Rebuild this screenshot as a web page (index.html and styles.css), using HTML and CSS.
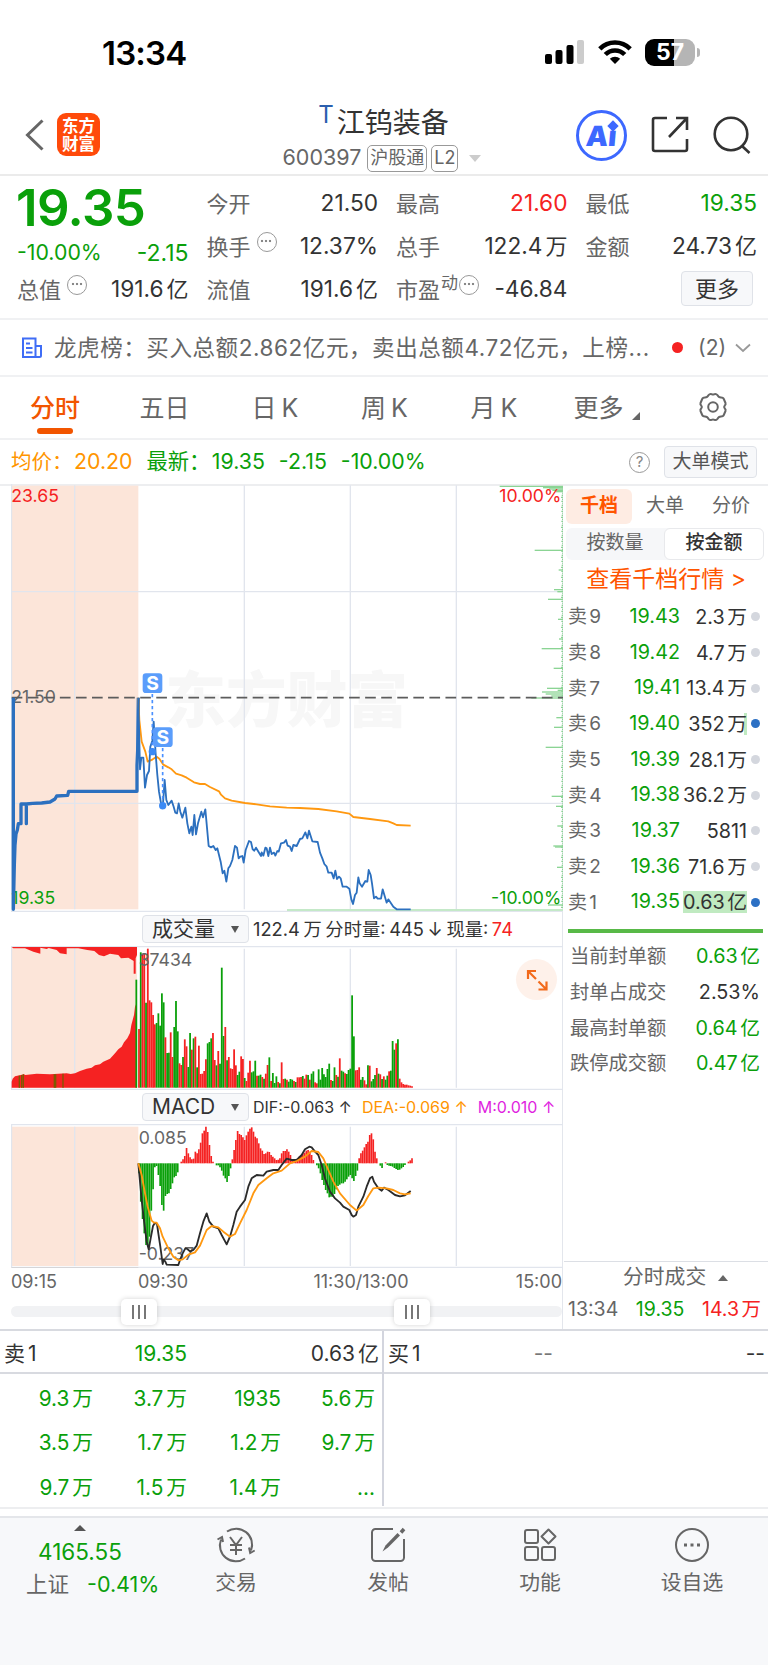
FILE: index.html
```html
<!DOCTYPE html>
<html lang="zh-CN">
<head>
    <meta charset="UTF-8">
    <meta name="viewport" content="width=device-width, initial-scale=1.0">
    <title>江钨装备 600397</title>
    <link rel="stylesheet" href="styles.css">
</head>
<body>

    <div class="status-bar">
        <span class="clock">13:34</span>
        <div class="status-icons">
            <svg width="40" height="26" viewBox="0 0 40 26">
                <rect x="0" y="15" width="7" height="10" rx="2"/>
                <rect x="10.500" y="11" width="7" height="14" rx="2"/>
                <rect x="21.500" y="6" width="7" height="19" rx="2"/>
                <rect x="32" y="1" width="7" height="24" rx="2" fill="#ccc"/>
            </svg>
            <svg width="34" height="26" viewBox="0 0 34 26" fill="none" stroke="#000" stroke-width="4.600">
                <path d="M1.800 9.800a21.500 21.500 0 0 1 30.400 0"/>
                <path d="M7.300 15.500a13.700 13.700 0 0 1 19.400 0"/>
                <path d="M17 25l-5.200-5.200a7.400 7.400 0 0 1 10.400 0z" fill="#000" stroke="none"/>
            </svg>
            <div class="battery"><span>57</span></div>
        </div>
    </div>

    <header class="header">
        <div class="header-left">
            <svg width="20" height="32" viewBox="0 0 20 32" fill="none" stroke="#666" stroke-width="3"><path d="M17.500 1.500L2.500 16l15 14.500"/></svg>
            <div class="logo"><span>东方</span><span>财富</span></div>
        </div>
        <div class="header-title">
            <div class="stock-name"><sup>T</sup>江钨装备</div>
            <div class="stock-code">600397 <span class="tag">沪股通</span><span class="tag">L2</span><i class="tri-down"></i></div>
        </div>
        <div class="header-right">
            <div class="ai"><span>Ai</span><i></i></div>
            <svg width="38" height="38" viewBox="0 0 38 38" fill="none" stroke="#333" stroke-width="2.600"><path d="M16 2H4a2 2 0 0 0-2 2v29a2 2 0 0 0 2 2h30a2 2 0 0 0 2-2V23M25 2h11v12M36 2L18 21"/></svg>
            <svg width="38" height="38" viewBox="0 0 38 38" fill="none" stroke="#333" stroke-width="2.600"><circle cx="18" cy="18" r="16.300"/><path d="M28.500 29.500l8 7.500"/></svg>
        </div>
    </header>

    <section class="quote">
        <div class="quote-col">
            <div class="price">19.35</div>
            <div class="change green"><span>-10.00%</span><span>-2.15</span></div>
            <div class="cell"><label>总值<i class="more-dot"></i></label><b>191.6<u>亿</u></b></div>
        </div>
        <div class="quote-col">
            <div class="cell"><label>今开</label><b>21.50</b></div>
            <div class="cell"><label>换手<i class="more-dot"></i></label><b>12.37%</b></div>
            <div class="cell"><label>流值</label><b>191.6<u>亿</u></b></div>
        </div>
        <div class="quote-col">
            <div class="cell"><label>最高</label><b class="red">21.60</b></div>
            <div class="cell"><label>总手</label><b>122.4<u>万</u></b></div>
            <div class="cell"><label>市盈<sup>动</sup><i class="more-dot"></i></label><b>-46.84</b></div>
        </div>
        <div class="quote-col">
            <div class="cell"><label>最低</label><b class="green">19.35</b></div>
            <div class="cell"><label>金额</label><b>24.73<u>亿</u></b></div>
            <div class="cell cell-end"><button class="btn-more">更多</button></div>
        </div>
    </section>

    <section class="news">
        <svg width="22" height="22" viewBox="0 0 22 22" fill="none" stroke="#3f6df6" stroke-width="2"><path d="M2 1.500h12.500v18.500H2zM14.500 9H20v9.500a1.500 1.500 0 0 1-1.500 1.500H14.500M5 6.500h4M5 11h6.500M5 15.500h6.500"/></svg>
        <span class="news-text">龙虎榜：买入总额2.862亿元，卖出总额4.72亿元，上榜...</span>
        <i class="news-dot"></i>
        <span class="news-count">(2)</span>
        <svg width="16" height="10" viewBox="0 0 16 10" fill="none" stroke="#999" stroke-width="1.800"><path d="M1 1.500l7 6.500 7-6.500"/></svg>
    </section>

    <nav class="tabs">
        <span class="tab active">分时</span>
        <span class="tab">五日</span>
        <span class="tab">日 K</span>
        <span class="tab">周 K</span>
        <span class="tab">月 K</span>
        <span class="tab">更多<i class="corner"></i></span>
        <svg class="gear" width="30" height="30" viewBox="0 0 30 30" fill="none" stroke="#666" stroke-width="2" stroke-linejoin="round"><path d="M10.500 3.200Q12 1.500 13.500 2.200Q15 3 16.500 2.200Q18 1.500 19.500 3.200Q20.500 5.500 23 5.500Q25.500 5.500 26 7.500L27.500 11Q28 12.500 26.800 13.500Q25.500 15 26.800 16.500Q28 17.500 27.500 19L26 22.500Q25.500 24.500 23 24.500Q20.500 24.500 19.500 26.800Q18 28.500 16.500 27.800Q15 27 13.500 27.800Q12 28.500 10.500 26.800Q9.500 24.500 7 24.500Q4.500 24.500 4 22.500L2.500 19Q2 17.500 3.200 16.500Q4.500 15 3.200 13.500Q2 12.500 2.500 11L4 7.500Q4.500 5.500 7 5.500Q9.500 5.500 10.500 3.200z"/><circle cx="15" cy="15" r="4.800"/></svg>
    </nav>

    <div class="info">
        <span class="orange">均价：<b>20.20</b></span>
        <span class="green">最新：<b>19.35</b></span>
        <span class="green">-2.15</span>
        <span class="green">-10.00%</span>
        <i class="help">?</i>
        <button class="btn-mode">大单模式</button>
    </div>

    <main class="main">
        <!-- chart coordinates are 3 units per pixel -->
        <div class="charts">
            <svg class="chart-price" viewBox="33 12 1656 1284" id="priceChart">
                <rect x="35" y="17" width="380" height="1271" fill="#fce5d9"/>
                <text class="watermark" x="496" y="725">东方财富</text>
                <path class="grid" d="M224 16V1288M733 16V1288M1051 16V1288M1369 16V1288M35 335H1689M35 970H1689"/>
                <path class="grid" d="M34.500 12V1294M33 1294H1689"/>
                <text class="axis red" x="34" y="65">23.65</text>
                <text class="axis" x="34" y="668">21.50</text>
                <text class="axis green" x="34" y="1273">19.35</text>
                <rect x="861" y="1287" width="828" height="6" fill="#c4e9c8"/>
                <g id="depth" stroke="#8bd494" stroke-width="4"></g>
                <path d="M35 653H1689" stroke="#5c5c5c" stroke-width="5" stroke-dasharray="32 16.200"/>
                <text class="axis red" x="1684" y="65" text-anchor="end">10.00%</text>
                <text class="axis green" x="1684" y="1273" text-anchor="end">-10.00%</text>
                <path class="line blue thick" d="M40 653V1288L43 1155L45 1095L48 1062L52 1050L55 1031H63V972H79V1031V972L98 970L125 969L150 966L165 957L170 948L203 946L206 934H411V856L413 812L415 653"/>
                <polyline class="line avg" points="415,653 418,720 425,785 436,815 443,845 450,842 458,838 470,830 478,836 490,854 505,862 515,868 528,881 545,886 560,893 582,907 600,912 615,912 630,921 657,934 663,944 675,955 695,962 735,969 770,973 810,979 860,983 900,984 955,987 1010,994 1048,1001 1060,1011 1110,1017 1165,1024 1180,1030 1190,1035 1232,1037"/>
                <polyline class="line blue" points="415,653 420,868 424,833 430,833 435,923 441,885 447,873 451,800 457,782 461,725 467,822 472,885 477,935 484,975 488,985 494,900 499,960 505,975 515,962 521,980 526,998 531,1000 536,970 541,995 547,1013 556,983 562,1030 568,1060 574,1040 578,1065 583,1005 588,1063 594,1030 604,995 609,1012 616,988 626,1098 633,1102 640,1098 647,1110 652,1105 662,1145 668,1180 673,1172 679,1205 685,1165 690,1158 697,1140 705,1098 711,1103 716,1135 721,1130 727,1128 731,1148 737,1110 747,1083 753,1086 758,1108 763,1112 768,1103 778,1120 783,1128 785,1117 790,1127 796,1103 800,1105 805,1128 810,1103 815,1122 822,1118 826,1127 832,1113 836,1115 843,1090 852,1088 858,1080 863,1097 870,1100 875,1113 880,1095 890,1098 900,1077 907,1075 916,1057 922,1075 927,1052 937,1084 953,1086 960,1118 967,1135 973,1152 980,1160 985,1178 995,1178 1001,1195 1006,1172 1011,1197 1017,1190 1022,1195 1028,1220 1040,1220 1048,1226 1054,1258 1059,1272 1065,1245 1070,1238 1075,1192 1079,1210 1086,1220 1096,1203 1102,1205 1106,1170 1112,1185 1116,1210 1122,1255 1128,1250 1133,1256 1143,1256 1148,1228 1160,1268 1165,1258 1172,1268 1180,1280 1190,1288 1232,1288"/>
                <g class="sell">
                    <path d="M457 642V810M488 804V970"/>
                    <circle cx="457" cy="815" r="11"/><circle cx="488" cy="977" r="11"/>
                    <rect x="428" y="580" width="59" height="59" rx="10"/>
                    <rect x="459" y="742" width="59" height="59" rx="10"/>
                    <text x="457.500" y="630">S</text><text x="488.500" y="792">S</text>
                </g>
            </svg>

            <div class="indicator">
                <button class="select">成交量<i></i></button>
                <span class="ind-text">122.4 万 分时量: 445 ↓ 现量: <em class="red">74</em></span>
            </div>
            <div class="chart-wrap">
                <svg class="chart-vol" viewBox="33 123 1656 432">
                    <rect x="35" y="126" width="376" height="422" fill="#fce5d9"/>
                    <path class="grid" d="M224 126V548M733 131V548M1051 131V548M1369 131V548M33 124.500H1689M33 553H1689M34.500 123V555"/>
                    <path fill="#f52222" d="M35 548V530L38 521L45 514L72 508L76 510L110 506L150 508L200 505L212 507L225 505L240 498L260 491L275 488L285 481L300 478L310 470L330 461L345 445L355 433L365 425L372 412L382 400L390 384L394 360L402 330L405 305L411 290V548z"/>
                    <path fill="#f52222" d="M35 126L40 130H75L100 140L121 146V128L140 132L146 129L170 135L180 145L200 148V130H235L262 135L283 138L297 150L312 154L330 146L355 150L363 160L385 158L401 168V206H407V160L411 150V126z"/>
                    <path stroke="#7d5a00" stroke-width="4" d="M58 512V548M65 510V548M70 508V548M163 508V548M167 508V548M189 506V548"/>
                    <g id="volume" stroke-width="5.400"></g>
                    <text class="axis" x="416" y="183">37434</text>
                </svg>
                <div class="expand">
                    <svg width="22" height="22" viewBox="0 0 22 22" fill="none" stroke="#f26a1b" stroke-width="2.200"><path d="M10 2H2v8M2 2l8 8M12.500 12.500l8 8M20.500 12.500v8h-8"/></svg>
                </div>
            </div>

            <div class="indicator">
                <button class="select">MACD<i></i></button>
                <span class="ind-text macd-text">DIF:-0.063 ↑<em class="orange">DEA:-0.069 ↑</em><em class="magenta">M:0.010 ↑</em></span>
            </div>
            <svg class="chart-macd" viewBox="33 102 1656 432">
                <rect x="35" y="110" width="380" height="418" fill="#fce5d9"/>
                <path class="grid" d="M224 110V528M733 110V528M1051 110V528M1369 110V528M33 103.500H1689M33 532.500H1689M34.500 103V532"/>
                <path d="M35 533H415" stroke="#d5d5d8" stroke-width="4"/>
                <g id="macd" stroke-width="5"></g>
                <text class="axis" x="416" y="162">0.085</text>
                <text class="axis" x="416" y="510">-0.237</text>
                <polyline class="line dif" points="415,220 425,330 433,400 440,455 446,478 452,445 459,408 465,398 471,402 475,430 481,470 488,522 491,508 496,515 500,524 535,525 540,510 548,490 556,475 562,477 570,484 580,480 590,467 600,430 610,395 620,370 628,395 640,410 655,415 665,435 680,463 690,440 700,405 710,365 720,350 735,330 745,290 755,265 770,255 790,257 800,245 820,240 835,240 845,225 860,206 875,210 890,210 905,195 915,178 928,170 935,172 945,185 955,195 965,225 975,265 990,305 1005,325 1020,338 1030,350 1048,360 1055,375 1060,380 1068,375 1075,350 1090,320 1100,290 1110,265 1117,260 1122,275 1135,295 1145,302 1152,293 1165,300 1185,315 1200,319 1215,316 1232,303"/>
                <polyline class="line avg" points="415,220 425,255 435,310 443,350 455,392 462,398 470,398 480,415 488,440 505,475 520,500 535,511 548,508 565,494 585,487 600,467 620,420 635,408 655,412 670,425 690,440 705,432 720,400 740,360 760,310 775,285 800,265 820,250 845,242 870,220 890,213 915,200 935,183 955,186 970,205 985,240 1000,275 1020,310 1050,345 1070,362 1090,345 1105,318 1120,295 1135,293 1160,295 1180,300 1200,310 1215,313 1232,310"/>
            </svg>
            <div class="times"><span>09:15</span><span>09:30</span><span>11:30/13:00</span><span>15:00</span></div>
            <div class="slider"><i class="handle"></i><i class="handle"></i></div>
        </div>

        <aside class="side">
            <div class="side-tabs"><span class="active">千档</span><span>大单</span><span>分价</span></div>
            <div class="segment"><span>按数量</span><span class="active">按金额</span></div>
            <div class="side-link">查看千档行情 &gt;</div>
            <div class="orders">
                <div class="order"><label>卖 9</label><span>19.43</span><b>2.3 万</b><i></i></div>
                <div class="order"><label>卖 8</label><span>19.42</span><b>4.7 万</b><i></i></div>
                <div class="order"><label>卖 7</label><span>19.41</span><b>13.4 万</b><i></i></div>
                <div class="order mark"><label>卖 6</label><span>19.40</span><b>352 万</b><i></i></div>
                <div class="order"><label>卖 5</label><span>19.39</span><b>28.1 万</b><i></i></div>
                <div class="order"><label>卖 4</label><span>19.38</span><b>36.2 万</b><i></i></div>
                <div class="order"><label>卖 3</label><span>19.37</span><b>5811</b><i></i></div>
                <div class="order"><label>卖 2</label><span>19.36</span><b>71.6 万</b><i></i></div>
                <div class="order mark full"><label>卖 1</label><span>19.35</span><b>0.63 亿</b><i></i></div>
            </div>
            <div class="stats">
                <div class="stat"><label>当前封单额</label><b class="green">0.63 亿</b></div>
                <div class="stat"><label>封单占成交</label><b>2.53%</b></div>
                <div class="stat"><label>最高封单额</label><b class="green">0.64 亿</b></div>
                <div class="stat"><label>跌停成交额</label><b class="green">0.47 亿</b></div>
            </div>
            <div class="deals">
                <div class="deals-title">分时成交<i></i></div>
                <div class="deal"><span>13:34</span><span class="green">19.35</span><span class="red">14.3 万</span></div>
            </div>
        </aside>
    </main>

    <section class="queue">
        <div class="queue-side">
            <div class="queue-head"><span>卖 1</span><span class="green">19.35</span><span>0.63 亿</span></div>
            <div class="queue-grid green">
                <span>9.3 万</span><span>3.7 万</span><span>1935</span><span>5.6 万</span>
                <span>3.5 万</span><span>1.7 万</span><span>1.2 万</span><span>9.7 万</span>
                <span>9.7 万</span><span>1.5 万</span><span>1.4 万</span><span>...</span>
            </div>
        </div>
        <div class="queue-side">
            <div class="queue-head"><span>买 1</span><span class="grey">--</span><span>--</span></div>
        </div>
    </section>

    <footer class="footer">
        <div class="index">
            <i class="tri-up"></i>
            <div class="green">4165.55</div>
            <div class="index-row"><span>上证</span><span class="green">-0.41%</span></div>
        </div>
        <div class="foot-item">
            <svg width="40" height="36" viewBox="0 0 40 36" fill="none" stroke="#666" stroke-width="2"><path d="M11 4.500A16 16 0 0 1 35 23.500M33 20.500l1.200 5.500 4.500-2.500M29 31.500A16 16 0 0 1 5 12.500M1.500 12.500L6 10l1 5M14 10l6 8 6-8M20 18v10M14 18h12M14 23h12"/></svg>
            <span>交易</span>
        </div>
        <div class="foot-item">
            <svg width="36" height="36" viewBox="0 0 36 36" fill="none" stroke="#666" stroke-width="2"><path d="M23 2H5.500A3.500 3.500 0 0 0 2 5.500v25A3.500 3.500 0 0 0 5.500 34h25a3.500 3.500 0 0 0 3.500-3.500V12"/><path d="M31 5.500l3-3.500" stroke-width="3.500"/><path d="M12.500 24.500l3-6L27.500 6l2.500 2.500L18 20.500z" fill="#666" stroke="none"/></svg>
            <span>发帖</span>
        </div>
        <div class="foot-item">
            <svg width="34" height="36" viewBox="0 0 34 36" fill="none" stroke="#666" stroke-width="2"><rect x="2" y="3" width="13" height="13" rx="2"/><rect x="2" y="20" width="13" height="13" rx="2"/><rect x="19" y="20" width="13" height="13" rx="2"/><path d="M25.500 2.500l7 7-7 7-7-7z" stroke-linejoin="round"/></svg>
            <span>功能</span>
        </div>
        <div class="foot-item">
            <svg width="36" height="36" viewBox="0 0 36 36" fill="none" stroke="#666" stroke-width="2"><circle cx="18" cy="18" r="16"/><path d="M10 18h3M16.500 18h3M23 18h3" stroke-width="3"/></svg>
            <span>设自选</span>
        </div>
    </footer>

    <script src="script.js"></script>
</body>
</html>
```
FILE: styles.css
```css
* {
    box-sizing: border-box;
}
body {
    margin: 0;
    width: 768px;
    height: 1665px;
    overflow: hidden;
    background: #fff;
    color: #333;
    font-family: Inter, "Noto Sans CJK SC", sans-serif;
    font-size: 20px;
    line-height: 1;
    white-space: nowrap;
}
i, em, u, b {
    font-style: normal;
    font-weight: normal;
    text-decoration: none;
}
button {
    padding: 0;
    font-family: inherit;
    color: #333;
    background: #f7f8fa;
    border: 1.5px solid #dfe2e8;
    border-radius: 4px;
}
.red { color: #f52222; fill: #f52222; }
.green { color: #0aa00a; fill: #0aa00a; }
.orange { color: #ff9500; }
.magenta { color: #e01fe0; }
.grey { color: #777; }

/* status bar */
.status-bar {
    display: flex;
    justify-content: space-between;
    align-items: center;
    height: 104px;
    padding: 0 67px 0 102px;
}
.clock {
    font-size: 33px;
    font-weight: 600;
    color: #000;
    letter-spacing: -0.8px;
    padding-top: 2px;
}
.status-icons {
    display: flex;
    align-items: center;
    gap: 13px;
}
.battery {
    position: relative;
    width: 50px;
    height: 27px;
    border-radius: 9px;
    margin-right: 6px;
    background: linear-gradient(90deg, #000 57%, #b5b5b5 57%);
    color: #fff;
    font-size: 23px;
    font-weight: 700;
    line-height: 27px;
    text-align: center;
}
.battery::after {
    content: "";
    position: absolute;
    right: -5px;
    top: 9px;
    width: 3px;
    height: 9px;
    border-radius: 0 3px 3px 0;
    background: #b5b5b5;
}

/* header */
.header {
    display: grid;
    grid-template-columns: 230px 1fr 230px;
    height: 72px;
    border-bottom: 2px solid #ebebeb;
}
.header-left {
    display: flex;
    align-items: center;
    gap: 12px;
    padding: 0 0 11px 25px;
    height: 72px;
}
.logo {
    display: flex;
    flex-direction: column;
    justify-content: center;
    align-items: center;
    width: 43px;
    height: 43px;
    border-radius: 9px;
    background: #ff4a0a;
    color: #fff;
    font-size: 16.500px;
    font-weight: 600;
    line-height: 18px;
}
.header-title {
    text-align: center;
}
.stock-name {
    height: 37px;
    font-size: 28px;
    line-height: 38px;
    margin-left: -1px;
}
.stock-name sup {
    font-size: 24px;
    line-height: 0;
    color: #2b5fae;
    margin-right: 3px;
    vertical-align: 10px;
}
.stock-code {
    display: flex;
    justify-content: center;
    align-items: center;
    height: 34px;
    font-size: 21.500px;
    color: #666;
    margin-right: 4px;
}
.tag {
    height: 27px;
    padding: 0 2px;
    margin-left: 4px;
    border: 1.5px solid #999;
    border-radius: 5px;
    font-size: 18px;
    line-height: 24px;
}
.stock-code .tag:first-of-type {
    margin-left: 6px;
}
.tri-down {
    margin-left: 11px;
    border: 6.5px solid transparent;
    border-top: 7px solid #ccc;
    border-bottom: 0;
}
.header-right {
    display: flex;
    align-items: center;
    gap: 24px;
    height: 62px;
    padding-left: 38px;
}
.ai {
    position: relative;
    width: 51px;
    height: 51px;
    border: 3px solid #3d68ff;
    border-radius: 50%;
    color: #3d68ff;
    font-size: 28px;
    font-weight: 900;
    line-height: 46px;
    text-align: center;
}
.ai span {
    display: block;
    transform: skewX(-5deg);
}
.ai i {
    position: absolute;
    right: 7px;
    top: 9px;
    width: 8px;
    height: 8px;
    background: #3d68ff;
    transform: rotate(45deg);
}

/* quote */
.quote {
    display: grid;
    grid-template-columns: repeat(4, 171.5px);
    gap: 18px;
    height: 144px;
    padding: 6px 0 0 17px;
    border-bottom: 2px solid #f0f1f3;
}
.price {
    height: 51px;
    font-size: 51px;
    font-weight: 600;
    line-height: 51px;
    letter-spacing: -0.6px;
    margin-left: -1px;
    color: #0aa00a;
}
.change {
    display: flex;
    justify-content: space-between;
    height: 35px;
    line-height: 39px;
    font-size: 21.300px;
}
.change span + span {
    font-size: 23px;
    line-height: 41px;
}
.cell {
    display: flex;
    justify-content: space-between;
    align-items: center;
    height: 43px;
    font-size: 22px;
}
.cell b {
    font-size: 22.700px;
    margin-top: -1px;
}
.cell label {
    display: flex;
    align-items: center;
    color: #666;
}
.cell sup {
    font-size: 17px;
    margin: 0 1px;
    align-self: flex-start;
    margin-top: -4px;
}
.cell u {
    margin-left: 3px;
    font-size: 22px;
}
.cell-end {
    justify-content: flex-end;
    padding-right: 4px;
}
.more-dot {
    width: 20px;
    height: 20px;
    margin: -10px 0 0 6px;
    border: 1.5px solid #999;
    border-radius: 50%;
    background-repeat: no-repeat;
    background-size: 4px 4px;
    background-position: 2.500px 6.500px, 6.500px 6.500px, 10.500px 6.500px;
    background-image: radial-gradient(circle, #888 1.1px, transparent 1.6px), radial-gradient(circle, #888 1.1px, transparent 1.6px), radial-gradient(circle, #888 1.1px, transparent 1.6px);
}
.cell sup + .more-dot {
    margin-left: 0;
}
.btn-more {
    width: 72px;
    height: 35px;
    font-size: 22px;
    line-height: 30px;
    margin-top: -2px;
}

/* news */
.news {
    display: flex;
    align-items: center;
    height: 57px;
    padding-left: 21px;
    border-bottom: 2px solid #f0f1f3;
    font-size: 22.500px;
    color: #666;
}
.news-text {
    width: 594px;
    margin-left: 11px;
    padding-top: 1px;
    letter-spacing: 0.58px;
}
.news-dot {
    width: 11px;
    height: 11px;
    margin: 0 15px 0 24px;
    border-radius: 50%;
    background: #f52222;
}
.news-count {
    width: 37px;
    font-size: 21px;
}

/* tabs */
.tabs {
    display: flex;
    position: relative;
    height: 63px;
    border-bottom: 2px solid #f0f1f3;
    font-size: 25px;
    line-height: 62px;
    word-spacing: -2px;
    color: #666;
}
.tab {
    width: 110px;
    text-align: center;
    position: relative;
}
.tab:nth-child(2) { width: 109px; }
.tab:nth-child(3) { width: 112px; }
.tab:nth-child(4) { width: 107px; }
.tab:nth-child(5) { width: 112px; }
.tab:nth-child(6) { width: 97px; }
.tab.active {
    color: #f25500;
    font-weight: 500;
}
.tab.active::after {
    content: "";
    position: absolute;
    left: 37px;
    bottom: 4px;
    width: 36px;
    height: 6px;
    border-radius: 3px;
    background: #f25500;
}
.corner {
    position: absolute;
    right: 7px;
    bottom: 18px;
    border-left: 8px solid transparent;
    border-bottom: 8px solid #666;
}
.gear {
    margin: 15px 0 0 51px;
}

/* info line */
.info {
    display: flex;
    align-items: center;
    height: 44px;
    padding: 0 11px;
    font-size: 20.500px;
    gap: 14px;
}
.info .green, .info b {
    font-size: 21.300px;
}
.info b {
    margin-left: 1.500px;
}
.help {
    width: 21px;
    height: 21px;
    margin-left: auto;
    border: 1.5px solid #999;
    border-radius: 50%;
    font-size: 15px;
    line-height: 18px;
    text-align: center;
    color: #888;
}
.btn-mode {
    width: 93px;
    height: 32px;
    font-size: 19px;
    line-height: 28px;
    color: #555;
}

/* charts */
.main {
    display: flex;
    height: 845px;
    border-top: 2px solid #edeef0;
}
.charts {
    width: 563px;
    padding-left: 11px;
    border-right: 1.5px solid #e3e6ec;
}
.charts svg {
    display: block;
}
.chart-price {
    width: 552px;
    height: 428px;
    margin-top: -2px;
}
.chart-vol {
    width: 552px;
    height: 144px;
}
.chart-macd {
    width: 552px;
    height: 144px;
}
.grid {
    stroke: #e1e5ed;
    stroke-width: 4;
    fill: none;
}
.axis {
    font-size: 53px;
}
.axis:not(.red):not(.green) {
    fill: #666;
}
.watermark {
    font-size: 182px;
    font-weight: 900;
    fill: #f7f7f7;
}
.line {
    fill: none;
    stroke-width: 5.5;
    stroke-linejoin: round;
}
.blue { stroke: #2c70bf; }
.avg { stroke: #ff9810; }
.dif { stroke: #2b2b2b; }
.thick { stroke-width: 10; }
.sell path {
    stroke: #4a90ff;
    stroke-width: 5;
    stroke-dasharray: 10 8;
}
.sell rect { fill: #5a9dfb; }
.sell circle { fill: #3b8af5; }
.sell text {
    fill: #fff;
    font-size: 58px;
    font-weight: 700;
    text-anchor: middle;
}
.indicator {
    display: flex;
    align-items: center;
    height: 34px;
    padding-left: 131px;
}
.select {
    display: flex;
    justify-content: space-between;
    align-items: center;
    width: 107px;
    height: 28px;
    padding: 0 9px;
    font-size: 21px;
    line-height: 24px;
}
.select i {
    border: 4px solid transparent;
    border-top: 7px solid #555;
    border-bottom: 0;
}
.ind-text {
    margin-left: 4px;
    font-size: 18.300px;
    word-spacing: -1.5px;
}
.macd-text {
    font-size: 16px;
    word-spacing: 0;
}
.macd-text em {
    margin-left: 10px;
}
.chart-wrap {
    position: relative;
}
.expand {
    position: absolute;
    right: 5px;
    top: 13px;
    display: flex;
    justify-content: center;
    align-items: center;
    width: 41px;
    height: 41px;
    border-radius: 50%;
    background: #fef1ea;
}
.times {
    display: grid;
    grid-template-columns: 127px 120px 180px 1fr;
    height: 30px;
    font-size: 18px;
    line-height: 28px;
    color: #666;
}
.times span:nth-child(3) {
    text-align: center;
    padding-left: 26px;
}
.times span:last-child {
    text-align: right;
}
.slider {
    display: flex;
    align-items: center;
    height: 11px;
    margin-top: 8px;
    padding-left: 110px;
    gap: 237px;
    border-radius: 6px;
    background: #f1f2f4;
}
.handle {
    width: 36px;
    height: 26px;
    border-radius: 5px;
    background: linear-gradient(90deg, #777 2px, transparent 2px 6px, #777 6px 8px, transparent 8px 12px, #777 12px) 11px 6px / 14px 14px no-repeat #fff;
    box-shadow: 0 0 5px rgba(0, 0, 0, 0.18);
}

/* order book */
.side {
    display: flex;
    flex-direction: column;
    width: 205px;
    padding-left: 1px;
}
.side-tabs {
    display: flex;
    height: 35px;
    margin: 3px 0 4px 2px;
    font-size: 19px;
    line-height: 34px;
    text-align: center;
    color: #666;
}
.side-tabs span {
    width: 66px;
}
.side-tabs .active {
    background: #feece3;
    border-radius: 6px;
    color: #ff5500;
    font-weight: 600;
}
.segment {
    display: flex;
    height: 32px;
    margin: 0 4px 0 2px;
    border-radius: 6px;
    background: #f6f7f9;
    font-size: 19px;
    line-height: 30px;
    text-align: center;
    color: #666;
}
.segment span {
    flex: 1;
}
.segment .active {
    border: 1.5px solid #e8e9ec;
    border-radius: 6px;
    background: #fff;
    color: #333;
    font-weight: 500;
    line-height: 28px;
}
.side-link {
    height: 37px;
    margin-bottom: 2px;
    font-size: 23px;
    line-height: 38px;
    text-align: center;
    color: #ff5500;
}
.order {
    display: grid;
    grid-template-columns: 40px 72px 67px 13px;
    align-items: center;
    height: 35.700px;
    padding-left: 4px;
    font-size: 19.800px;
    word-spacing: -3px;
}
.order label {
    font-size: 19px;
    color: #666;
}
.order span {
    color: #0aa00a;
    text-align: right;
}
.order b {
    justify-self: end;
    line-height: 22px;
}
.order i {
    width: 9px;
    height: 9px;
    margin-left: 4px;
    border-radius: 50%;
    background: #d4d7de;
}
.order.mark i {
    background: #2c70c4;
}
.order.mark b {
    background: linear-gradient(#c0eac1, #c0eac1) right / 3px 100% no-repeat;
}
.order.full b {
    background: #c0eac1;
}
.stats {
    margin: 9px 5px 0 4px;
    padding: 6px 3px 0 2px;
    border-top: 4px solid #58b947;
}
.stat {
    display: flex;
    justify-content: space-between;
    align-items: center;
    height: 35.700px;
    font-size: 19.800px;
    word-spacing: -3px;
}
.stat label {
    font-size: 19.300px;
    color: #666;
}
.deals {
    margin-top: auto;
    height: 68px;
    border-top: 1.5px solid #dcdfe5;
}
.deals-title {
    display: flex;
    align-items: center;
    height: 31px;
    padding-left: 59px;
    font-size: 20.800px;
    color: #666;
}
.deals-title i {
    margin-left: 12px;
    border: 5px solid transparent;
    border-bottom: 6px solid #666;
    border-top: 0;
}
.deal {
    display: flex;
    justify-content: space-between;
    padding: 0 7px 0 4px;
    font-size: 19.500px;
    line-height: 33px;
    word-spacing: -3px;
    color: #666;
}

/* queue */
.queue {
    display: flex;
    height: 180px;
    border-top: 2px solid #d8dae0;
    border-bottom: 2px solid #edeef0;
    word-spacing: -3px;
}
.queue-side {
    width: 384px;
    height: 175px;
}
.queue-side:first-child {
    border-right: 2px solid #d3d5de;
}
.queue-head {
    display: grid;
    grid-template-columns: 90px 93px 1fr;
    align-items: center;
    height: 43px;
    padding: 4px 3px 0 4px;
    border-bottom: 2px solid #d8dae0;
    font-size: 21px;
}
.queue-head span + span {
    text-align: right;
}
.queue-side + .queue-side .queue-head {
    grid-template-columns: 90px 75px 1fr;
}
.queue-grid {
    display: grid;
    grid-template-columns: repeat(4, 94px);
    grid-auto-rows: 44.500px;
    align-items: center;
    margin: 3px 0 0 -1px;
    font-size: 20.800px;
    text-align: right;
}

/* footer */
.footer {
    display: flex;
    height: 150px;
    margin-top: 7px;
    border-top: 2px solid #e4e6ea;
    background: #f7f8fa;
    font-size: 21.500px;
    color: #666;
}
.index {
    width: 160px;
    text-align: center;
    line-height: 32px;
}
.index > .green {
    font-size: 22.500px;
    padding-top: 1px;
}
.tri-up {
    display: block;
    width: 0;
    margin: 7px 0 4px 74px;
    border: 6.5px solid transparent;
    border-bottom: 6px solid #555;
    border-top: 0;
}
.index-row {
    display: flex;
    gap: 18px;
    padding-left: 26px;
}
.foot-item {
    display: flex;
    flex-direction: column;
    align-items: center;
    width: 152px;
    padding-top: 9px;
}
.foot-item span {
    margin-top: 10px;
    font-size: 20.800px;
}
```
FILE: script.js
```js
var RED = "#f52222";
var GREEN = "#0aa00a";
var SVG_NS = "http://www.w3.org/2000/svg";

// per-minute bars: colour letter + y of the bar top
var volume = ("r372 g142 r150 r145 g293 r131 r286 r292 r330 r358 g354 g325 g362 g265 g292 r397 g444 g443 r382 r456 " +
    "g366 g288 g379 r475 r480 g456 r403 r424 g486 g384 r434 g400 r395 g487 r422 r507 r506 r498 r463 g415 " +
    "g411 g400 r384 r465 g481 r438 g476 g188 g393 r366 g466 r456 r490 r492 r433 r481 g510 g500 r454 r462 " +
    "g519 r528 r503 r467 g502 g499 g467 r512 g512 g509 r516 g521 r506 r480 g457 r528 g504 g534 g514 r531 " +
    "g535 r472 r522 g521 r524 g530 g522 g524 r528 g531 r517 r517 r516 g513 r521 r509 g510 r524 g506 g499 " +
    "r532 r535 g493 g524 g489 g508 g516 g492 g476 r525 g528 g487 r510 g515 r460 g497 g500 r505 g507 g495 " +
    "g491 g271 g394 r496 r495 r487 g524 g516 r526 r538 g481 r482 g529 g522 g510 r489 g506 r508 g522 r514 " +
    "g524 g512 r499 g497 g408 g434 r415 g403 r521 r532 r537 r539 r539 r541 r542 r544").split(" ");

// macd histogram ends, zero line is y = 220
var macd = [250, 335, 387, 430, 465, 470, 440, 362, 298, 232, 228, 255, 288, 345, 362, 318, 312, 310, 297, 280,
    262, 258, 247, 220, 215, 208, 198, 174, 190, 202, 208, 206, 185, 190, 178, 158, 130, 122, 110, 126,
    165, 198, 215, 220, 226, 226, 232, 242, 257, 265, 276, 258, 235, 208, 180, 150, 123, 132, 135, 142,
    150, 136, 125, 116, 112, 125, 140, 145, 160, 175, 182, 192, 190, 185, 186, 195, 200, 205, 210, 209,
    205, 190, 183, 183, 178, 185, 195, 208, 212, 208, 206, 200, 198, 190, 188, 182, 180, 185, 195, 210,
    220, 226, 235, 250, 270, 285, 300, 310, 322, 320, 320, 312, 298, 288, 284, 280, 280, 275, 268, 260,
    255, 265, 273, 258, 242, 205, 190, 182, 172, 162, 155, 135, 130, 148, 185, 205, 220, 227, 234, 220,
    217, 225, 227, 228, 230, 234, 237, 240, 239, 235, 231, 225, 220, 215, 211, 205];

// order depth on the right edge: [y, length]
var depth = [[19, 190], [23, 60], [27, 42], [31, 32], [35, 22], [211, 85], [270, 13], [329, 27], [335, 17],
    [358, 45], [418, 15], [477, 12], [506, 64], [565, 28], [625, 48], [636, 63], [642, 52], [648, 35],
    [654, 95], [631, 16], [713, 20], [742, 27], [802, 52], [949, 34], [979, 21], [1038, 17], [1098, 29],
    [1101, 24], [1162, 18], [1275, 45]];

function bar(parent, x1, y1, x2, y2, color) {
    var line = document.createElementNS(SVG_NS, "line");
    line.setAttribute("x1", x1);
    line.setAttribute("y1", y1);
    line.setAttribute("x2", x2);
    line.setAttribute("y2", y2);
    if (color) {
        line.setAttribute("stroke", color);
    }
    parent.appendChild(line);
}

var volumeGroup = document.getElementById("volume");
bar(volumeGroup, 409, 548, 409, 224, GREEN);
volume.forEach(function (v, i) {
    var x = 417 + i * 819 / (volume.length - 1);
    bar(volumeGroup, x, 548, x, v.slice(1), v[0] === "r" ? RED : GREEN);
});

var macdGroup = document.getElementById("macd");
macd.forEach(function (y, i) {
    var x = 417 + i * 819 / (macd.length - 1);
    if (y !== 220) {
        bar(macdGroup, x, 220, x, y, y < 220 ? RED : GREEN);
    }
});

var depthGroup = document.getElementById("depth");
depth.forEach(function (d) {
    bar(depthGroup, 1689 - d[1], d[0], 1689, d[0]);
});
for (var y = 40; y < 1285; y += 6) {
    bar(depthGroup, 1689 - (2 + (y * 7) % 5 + (y % 42 === 0 ? 5 : 0)), y, 1689, y);
}
```
